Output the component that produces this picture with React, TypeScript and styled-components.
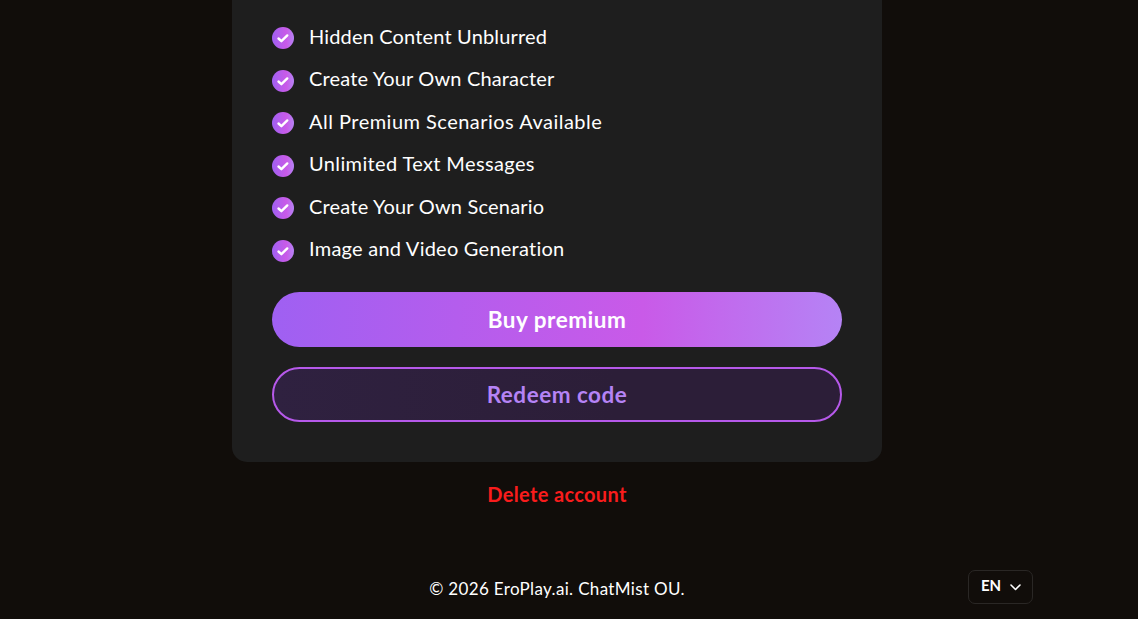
import styled, { createGlobalStyle } from "styled-components"

const features = [
  { label: "Hidden Content Unblurred", spacing: 0.16 },
  { label: "Create Your Own Character", spacing: 0.16 },
  { label: "All Premium Scenarios Available", spacing: 0.48 },
  { label: "Unlimited Text Messages", spacing: 0.37 },
  { label: "Create Your Own Scenario", spacing: 0.2 },
  { label: "Image and Video Generation", spacing: 0.24 },
]

const CheckIcon = () => {
  return <Check viewBox="0 0 22 22" fill="none">
    <defs>
      <linearGradient id="check" x1="0" y1="0" x2="1" y2="0">
        <stop offset="0" stopColor="#9f60f2" />
        <stop offset="0.65" stopColor="#c95ae8" />
        <stop offset="1" stopColor="#b583f5" />
      </linearGradient>
    </defs>
    <circle cx="11" cy="11" r="11" fill="url(#check)" />
    <path d="M6.5 11.5L9.4 14.2L15.3 8.4" stroke="#fff" strokeWidth="2.4" strokeLinecap="round" strokeLinejoin="round" />
  </Check>
}

const App = () => {
  return <Page>
    <GlobalStyle />

    <Card>
      <Features>
        {features.map(({ label, spacing }) => (
          <Feature key={label}>
            <CheckIcon />
            <Label spacing={spacing}>{label}</Label>
          </Feature>
        ))}
      </Features>

      <Buttons>
        <BuyButton>Buy premium</BuyButton>
        <RedeemButton>Redeem code</RedeemButton>
      </Buttons>
    </Card>

    <DeleteButton>Delete account</DeleteButton>

    <Footer>
      <div />
      <Copyright>© 2026 EroPlay.ai. ChatMist OU.</Copyright>
      <Language>
        <Code>EN</Code>
        <Chevron viewBox="0 0 11 7" fill="none">
          <path d="M1 1L5.5 5.5L10 1" stroke="#fff" strokeWidth="1.6" strokeLinecap="round" strokeLinejoin="round" />
        </Chevron>
      </Language>
    </Footer>
  </Page>
}

const GlobalStyle = createGlobalStyle`
  * {
    box-sizing: border-box;
  }

  body {
    margin: 0;
    background: #110d0a;
    color: #fff;
    font-family: Lato, sans-serif;
    overflow: hidden;
  }

  button {
    font-family: inherit;
    cursor: pointer;
  }
`

const Page = styled.div`
  width: 1114px;
  height: 619px;
  display: flex;
  flex-direction: column;
  align-items: center;
`

const Card = styled.div`
  width: 650px;
  height: 462px;
  padding: 16px 40px 40px;
  border-radius: 0 0 15px 15px;
  background: #1e1e1e;
`

const Features = styled.ul`
  margin: 0;
  padding: 0;
  list-style: none;
`

const Feature = styled.li`
  height: 42.5px;
  display: flex;
  align-items: center;
  gap: 15px;
`

const Check = styled.svg`
  width: 22px;
  height: 22px;
  flex-shrink: 0;
  margin-top: 2px;
`

const Label = styled.span<{
  spacing: number
}>`
  margin-bottom: 2px;
  font-size: 20px;
  line-height: 27px;
  white-space: nowrap;
  letter-spacing: ${p => p.spacing}px;
`

const Buttons = styled.div`
  display: grid;
  gap: 20px;
  margin-top: 21px;
`

const Button = styled.button`
  width: 100%;
  height: 55px;
  padding: 0;
  border: none;
  border-radius: 30px;
  font-size: 22.5px;
  font-weight: 700;
  letter-spacing: 0.5px;
`

const BuyButton = styled(Button)`
  background: linear-gradient(91deg, #9f60f2 0%, #c95ae8 65%, #b583f5 100%);
  color: #fff;
`

const RedeemButton = styled(Button)`
  border: 2px solid #b659ea;
  background: linear-gradient(91deg, #2f2140, #2c1e38 60%);
  color: #b583f5;
`

const DeleteButton = styled.button`
  height: 27px;
  margin-top: 18px;
  padding: 0;
  border: none;
  background: none;
  color: #f91c1c;
  font-size: 20px;
  font-weight: 700;
  letter-spacing: 0.34px;
`

const Footer = styled.footer`
  width: 952px;
  margin-top: 63px;
  display: grid;
  grid-template-columns: 1fr auto 1fr;
  align-items: center;
`

const Copyright = styled.p`
  margin: 3px 0 0;
  font-size: 17px;
  line-height: 23px;
  letter-spacing: 0.34px;
`

const Language = styled.button`
  width: 65px;
  height: 34px;
  justify-self: end;
  display: flex;
  align-items: center;
  gap: 9px;
  padding: 0 0 0 12px;
  border: 1px solid #2a2725;
  border-radius: 7px;
  background: none;
  color: #fff;
`

const Code = styled.span`
  margin-bottom: 5px;
  font-size: 15px;
  font-weight: 700;
`

const Chevron = styled.svg`
  width: 11px;
  height: 7px;
`

export default App;
